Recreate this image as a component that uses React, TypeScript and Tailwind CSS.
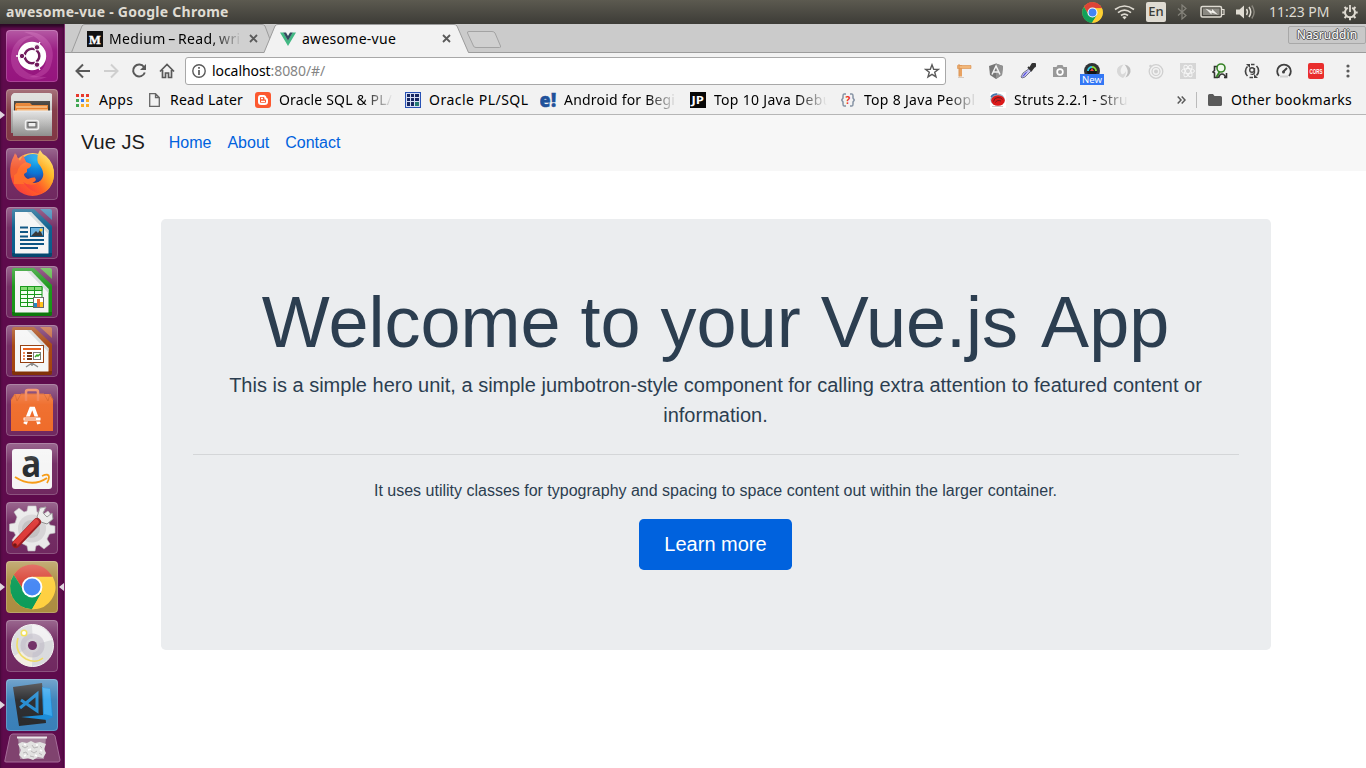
import React from "react";

type Kids = { children?: React.ReactNode };

function Glyph({ w = 16, h = 16, vb, children }: Kids & { w?: number; h?: number; vb?: string }) {
  return (
    <svg width={w} height={h} viewBox={vb ?? `0 0 ${w} ${h}`} className="block shrink-0" fill="none">
      {children}
    </svg>
  );
}

/* ---------- system bar ---------- */

function ChromeLogo({ size }: { size: number }) {
  return (
    <svg width={size} height={size} viewBox="0 0 48 48" className="block shrink-0">
      <circle cx="24" cy="24" r="23.500" fill="#fdd033" />
      <path d="M4.500 11A23.500 23.500 0 0 1 46 15H24L15 29Z" fill="#dc4437" />
      <path d="M4.500 11A23.500 23.500 0 0 0 23 47.500L34 30L24 32L15 29Z" fill="#12a05a" />
      <path d="M24 14H45.500A23.500 23.500 0 0 1 23 47.500L34 30Z" fill="#fdd033" />
      <circle cx="24" cy="24" r="11.500" fill="#fff" />
      <circle cx="24" cy="24" r="9" fill="#4285f4" />
    </svg>
  );
}

function SystemBar() {
  return (
    <header className="flex h-6 shrink-0 items-center bg-linear-to-b from-[#5c5a50] to-[#3d3c37] pl-1.5 text-[#dfdbd2]">
      <span className="text-[14px] font-bold leading-6 tracking-[0.26px]">awesome-vue - Google Chrome</span>
      <div className="ml-auto flex h-6 items-center">
        <ChromeLogo size={21} />
        <div className="ml-[11px]">
          <Glyph w={21} h={16}>
            <g stroke="#dfdbd2" strokeWidth="1.7">
              <path d="M1 5.5Q10.500-1.500 20 5.500" />
              <path d="M4 8.700Q10.500 3.500 17 8.700" />
              <path d="M7 11.500Q10.500 8.600 14 11.500" />
            </g>
            <path d="M8.300 13Q10.500 11.500 12.700 13L10.500 15.500Z" fill="#dfdbd2" />
          </Glyph>
        </div>
        <span className="ml-[11px] flex h-5 w-5 items-center justify-center rounded-[2px] bg-[#dfdbd2] text-[13px] font-medium text-[#3c3b37]">En</span>
        <div className="ml-[10px]">
          <Glyph w={12} h={16}>
            <path d="M2 4.500L10 11.500L6 15V1L10 4.500L2 11.500" stroke="#85837b" strokeWidth="1.200" />
          </Glyph>
        </div>
        <div className="ml-3">
          <Glyph w={25} h={14}>
            <rect x="1" y="1.500" width="20.500" height="10.500" rx="1.500" stroke="#dfdbd2" strokeWidth="1.500" />
            <path d="M22 4.500h2v5h-2" stroke="#dfdbd2" strokeWidth="1.200" />
            <rect x="3" y="3.500" width="16.500" height="6.500" fill="#8b8982" />
            <path d="M5.500 3.500L12 6.300L12 4L18 9.800L11.500 7.500L11.500 9.500Z" fill="#f2f0eb" />
          </Glyph>
        </div>
        <div className="ml-[11px]">
          <Glyph w={20} h={16}>
            <path d="M0 5.500h3.500L8 1.500v13L3.500 10.500H0z" fill="#dfdbd2" />
            <path d="M10.500 5Q12.500 8 10.500 11M13 3Q16.500 8 13 13" stroke="#dfdbd2" strokeWidth="1.500" />
            <path d="M15.800 1.500Q20.500 8 15.800 14.500" stroke="#89867d" strokeWidth="1.400" />
          </Glyph>
        </div>
        <span className="ml-[13px] w-[61px] whitespace-nowrap text-[14px] leading-6 tracking-[-0.02px]">11:23 PM</span>
        <div className="ml-3 mr-2">
          <Glyph w={16} h={18}>
            <g stroke="#dfdbd2">
              <path d="M5.800 4.800A5 5 0 1 0 10.200 4.800" strokeWidth="2" />
              <path d="M8 2V9" strokeWidth="1.800" />
              <path d="M.300 9.500h2.500M13.200 9.500h2.500M8 14.500V17.200M2.500 4l1.800 1.800M13.500 4l-1.800 1.800M2.500 15l1.800-1.800M13.500 15l-1.800-1.800" strokeWidth="2" />
            </g>
          </Glyph>
        </div>
      </div>
    </header>
  );
}

/* ---------- launcher ---------- */

function Tile({ children, tone, left, right }: Kids & { tone: string; left?: boolean; right?: boolean }) {
  return (
    <div className="relative flex h-[52px] w-full shrink-0 pl-1.5">
      {left && (
        <svg width="5" height="10" className="absolute left-0 top-[21px]"><path d="M0 1L5 5L0 9Z" fill="#e0d6de" /></svg>
      )}
      {right && (
        <svg width="5" height="10" className="absolute right-0 top-[21px]"><path d="M5 1L0 5L5 9Z" fill="#e0d6de" /></svg>
      )}
      <div className={`h-[52px] w-[52px] overflow-hidden rounded-[4px] ${tone}`}>
        <svg width="52" height="52" viewBox="0 0 52 52" fill="none" className="block">
          {children}
          <rect width="52" height="52" fill="url(#shine)" />
          <rect x=".500" y=".500" width="51" height="51" rx="3.500" stroke="#fff" strokeOpacity=".2" />
        </svg>
      </div>
    </div>
  );
}

function OfficeSheet({ edge, dark, fold, children }: Kids & { edge: string; dark: string; fold: string }) {
  return (
    <g>
      <path d="M8 2H28L46 19V48Q46 50 44 50H8Q6 50 6 48V4Q6 2 8 2Z" fill={edge} />
      <path d="M6 46V48Q6 50 8 50H44Q46 50 46 48V46Z" fill={dark} opacity=".6" />
      <path d="M9 5H25L42.500 23V46.500H9Z" fill="#f5f5f5" />
      <path d="M25 5L42.500 23V27L21 5Z" fill="#d3d9da" />
      <path d="M34 2H44Q46 2 46 4V13Z" fill={fold} opacity=".85" />
      {children}
    </g>
  );
}

function Launcher() {
  const glass = "bg-[#702860]";
  return (
    <aside className="flex w-[65px] shrink-0 flex-col gap-[7px] overflow-hidden border-r border-[#822b70] bg-[#5e0b4c] pt-1.5 shadow-[inset_0_3px_3px_#2c0826]">
      <svg width="0" height="0" className="absolute">
        <defs>
          <linearGradient id="shine" x1="0" y1="0" x2="0" y2="1">
            <stop offset="0" stopColor="#fff" stopOpacity=".3" />
            <stop offset=".4" stopColor="#fff" stopOpacity=".04" />
            <stop offset="1" stopColor="#fff" stopOpacity="0" />
          </linearGradient>
          <linearGradient id="steel" x1="0" y1="0" x2="0" y2="1">
            <stop offset="0" stopColor="#e4e4e4" />
            <stop offset="1" stopColor="#8e8e8c" />
          </linearGradient>
          <linearGradient id="fire" x1="1" y1="0" x2="0" y2="1">
            <stop offset="0" stopColor="#fff36e" />
            <stop offset=".35" stopColor="#ffb321" />
            <stop offset=".65" stopColor="#ff5b25" />
            <stop offset="1" stopColor="#f32a46" />
          </linearGradient>
          <radialGradient id="globe" cx=".6" cy=".2" r=".8">
            <stop offset="0" stopColor="#00a9f0" />
            <stop offset=".6" stopColor="#066ed1" />
            <stop offset="1" stopColor="#312a80" />
          </radialGradient>
        </defs>
      </svg>

      <Tile tone="bg-[#96147e]">
        <path d="M18 2C39 0 52 17 45 35C43 44 34 49 23 47C37 43 43 34 39 20C35 9 27 5 18 2Z" fill="#d45eb8" opacity=".35" />
        <path d="M7 18C-2 43 21 56 41 47C28 47 15 43 12 30C10 19 15 10 28 6C18 5 11 10 7 18Z" fill="#d76dbd" opacity=".3" />
        <circle cx="26" cy="26" r="14.200" fill="#fff" />
        <circle cx="26" cy="26" r="7.300" stroke="#6c1458" strokeWidth="2.600" />
        <path d="M26 26L10 26M26 26L34 12M26 26L34 40" stroke="#fff" strokeWidth="1.400" />
        <circle cx="26" cy="26" r="5.800" fill="#fff" />
        <g fill="#6c1458" stroke="#fff" strokeWidth="1">
          <circle cx="16" cy="26" r="2.700" /><circle cx="31" cy="17.300" r="2.700" /><circle cx="31" cy="34.700" r="2.700" />
        </g>
      </Tile>

      <Tile tone="bg-[#813744]" left>
        <path d="M8 5H43Q45 5 46 9V44H5V9Q5 5 8 5Z" fill="url(#steel)" />
        <path d="M5 10H46V5Q45 4 43 4H8Q6 4 5 10Z" fill="#d8d8d6" />
        <path d="M8 12H44V24H8Z" fill="#34312d" />
        <path d="M9 16L10 14H24L26 16H42V23H9Z" fill="#e77b25" />
        <path d="M10 18H41M11 21H42" stroke="#ffe2b2" />
        <path d="M7 22H46V47H7Z" fill="url(#steel)" />
        <path d="M7 22H46" stroke="#eee" />
        <rect x="19.500" y="31.500" width="13" height="9" rx="2" fill="#aaa" stroke="#efefef" strokeWidth="1.500" />
        <rect x="22" y="33.500" width="8" height="4.500" fill="#eee" stroke="#555" />
      </Tile>

      <Tile tone={glass}>
        <circle cx="26.500" cy="26.500" r="21.500" fill="url(#fire)" />
        <circle cx="27" cy="20.500" r="14.500" fill="url(#globe)" />
        <path d="M10 6Q11 10 14 13L17 7Q18 11 20 14L25 16Q26 19 21 21L21 24L18 26Q18 29 22 31Q25 29 29 29.500L30 32Q27 36 22 36H8V14Z" fill="#ff6a26" />
        <path d="M6 12Q8 8 9 5Q11 10 14 13L17 7L20 14Q12 17 11 25L5 30Q3 20 6 12Z" fill="#f4582d" />
        <path d="M17 34Q25 40 33 34Q42 27 32 15Q30 8 34 2Q36 6 40 8Q49 16 48 28Q46 42 35 46Q24 44 17 34Z" fill="url(#fire)" />
      </Tile>

      <Tile tone={glass}>
        <OfficeSheet edge="#075c8b" dark="#03395d" fold="#278fc0">
          <path d="M14 20.500h8M14 25h8M14 29.500h8M14 33h24M14 37h24M14 41h18" stroke="#075080" strokeWidth="2" />
          <rect x="24.500" y="20.500" width="13" height="9" fill="#69b1df" stroke="#075080" />
          <path d="M25 29L30 24L32 26L34 23L37 29Z" fill="#333" /><circle cx="35" cy="23" r="1.500" fill="#ffc72b" />
        </OfficeSheet>
      </Tile>

      <Tile tone={glass}>
        <OfficeSheet edge="#169415" dark="#086507" fold="#4bca36">
          <path d="M14.500 20.500H36V40.500H14.500Z" fill="#f2fff1" stroke="#119515" />
          <path d="M14.500 20.500H36V24.500H14.500Z" fill="#83db71" stroke="#119515" />
          <path d="M14.500 28.500H36M14.500 32.500H36M14.500 36.500H36M21.500 20.500V40.500M28.500 20.500V40.500" stroke="#119515" />
          <rect x="27.500" y="31.500" width="10" height="10" fill="#fff" stroke="#666" />
          <path d="M28 37h3v4h-3z" fill="#2384c2" /><path d="M31 33h3v8h-3z" fill="#ef682a" /><path d="M34 36h3v5h-3z" fill="#ffc21a" />
        </OfficeSheet>
      </Tile>

      <Tile tone={glass}>
        <OfficeSheet edge="#a4420c" dark="#6b2707" fold="#d06a2c">
          <rect x="14.500" y="20.500" width="23" height="17" fill="#fff" stroke="#933b0b" />
          <path d="M17 24h18" stroke="#e85d18" strokeWidth="2" />
          <path d="M17 28h2M17 31h2M17 34h2" stroke="#e85d18" strokeWidth="1.500" />
          <path d="M21 28h5M21 31h5M21 34h5" stroke="#71300d" strokeWidth="2" />
          <rect x="27.500" y="27.500" width="7" height="7" fill="#fff" stroke="#777" />
          <path d="M29 32l2-2 1 1 2-2" stroke="#33a321" strokeWidth="1.500" />
          <path d="M26 38v3M26 38l-6 4M26 38l6 4" stroke="#888" strokeWidth="1.500" />
        </OfficeSheet>
      </Tile>

      <Tile tone={glass}>
        <path d="M5 16L9 10H43L47 16V47H5Z" fill="#ef6b29" />
        <path d="M5 16L9 10L11 17L15 10H38L42 17L44 10L47 16" stroke="#d75b1c" />
        <path d="M20 17V8Q20 6 22 6H30Q32 6 32 8V17" stroke="#f07a49" strokeWidth="2.500" />
        <path d="M19 40L25 24.500H27.500L33 40" stroke="#fff" strokeWidth="3.600" />
        <rect x="17" y="33" width="18" height="4" rx="1" fill="#fff" stroke="#ef6b29" />
        <path d="M18.500 35H30" stroke="#ef6b29" />
      </Tile>

      <Tile tone={glass}>
        <rect x="6" y="6" width="40" height="40" rx="3" fill="#f5f5f5" />
        <text x="15.200" y="33.500" fontFamily="Open Sans" fontSize="37" fontWeight="700" fill="#24282b" textLength="20" lengthAdjust="spacingAndGlyphs">a</text>
        <path d="M9 34Q26 45 41 35" stroke="#f69a13" strokeWidth="2" />
        <path d="M36 33Q43 30 43 34Q43 37 41 40" stroke="#f69a13" strokeWidth="1.800" />
      </Tile>

      <Tile tone={glass}>
        <g fill="#e9e9e9" stroke="#b9b3b8" strokeWidth=".6">
          <path d="M22 4H30L31 10L37 12.500L42 9L46 14L42.500 20L44 23L49 24V31L43.500 32L41 37L44 42L38 47L33 43L30 44L29 49H22L21 44L15 41L10 44L6 38L9.500 33L8 30L3.500 29V22L9 21L11 15L8 10L13 6L18 10L21 9Z" />
        </g>
        <circle cx="26" cy="26.500" r="14" fill="#d5d3d5" />
        <circle cx="25" cy="27" r="9" fill="#c2c0c1" />
        <path d="M31 15L34 6L40 5L37 11L41 15L46 11L47 17L41 22L35 20Z" fill="#e9e9e9" stroke="#8c8c8c" />
        <path d="M10 42L31 20" stroke="#9d181b" strokeWidth="8" strokeLinecap="round" />
        <path d="M10 41L30 20" stroke="#dc3735" strokeWidth="5.500" strokeLinecap="round" />
        <circle cx="9" cy="43" r="1.800" fill="#6d1514" />
      </Tile>

      <Tile tone="bg-[#ac8c40]" left right>
        <g transform="translate(3.500 3.500) scale(.94)">
          <circle cx="24" cy="24" r="23.500" fill="#fdd03b" />
          <path d="M4.500 11A23.500 23.500 0 0 1 47 17H24L16 29Z" fill="#d94335" />
          <path d="M4.500 11A23.500 23.500 0 0 0 24 47.500L34 30L24 32L16 29Z" fill="#0b9b58" />
          <path d="M24 13H46A23.500 23.500 0 0 1 24 47.500L34 30Z" fill="#fecf3e" />
          <circle cx="24" cy="24" r="11" fill="#fff" /><circle cx="24" cy="24" r="9" fill="#4285f4" />
        </g>
      </Tile>

      <Tile tone={glass}>
        <circle cx="26.500" cy="25.500" r="21" fill="#d9dadd" stroke="#f4f4f3" />
        <path d="M26 5A21 21 0 0 1 46 20L27 25Z" fill="#f9f9f9" opacity=".7" />
        <path d="M26 46A21 21 0 0 1 8 36L27 25Z" fill="#f7f3e2" opacity=".8" />
        <circle cx="26.500" cy="25.500" r="12" fill="#bcb8c4" opacity=".6" />
        <circle cx="26.500" cy="25.500" r="7" fill="#d3d0d6" />
        <circle cx="26.500" cy="25.500" r="4.500" fill="#6f2b63" />
        <path d="M12 18Q8 32 20 39Q30 44 37 38" stroke="#efdb62" strokeWidth="1.600" />
        <circle cx="18" cy="13" r="3.500" fill="#f1de46" /><circle cx="18" cy="13" r="2" fill="#fff" />
      </Tile>

      <Tile tone="bg-[#397fb8]" left>
        <path d="M7 8L36 4L40 44L13 47Z" fill="#28292c" />
        <path d="M36 8L44 9L47 38L41 41L15 38L37 36Z" fill="#198bd7" />
        <path d="M37 9L44 10L46 37L38 35Z" fill="#36a6ed" />
        <path d="M15 21L31 32V15L14 29" stroke="#238bd0" strokeWidth="3" />
      </Tile>

      <svg width="58" height="30" viewBox="0 0 58 30" className="-mt-[5px] ml-1 block shrink-0" fill="none">
        <path d="M9 1H48Q50 1 51 3L56 27Q56 29 54 29H2Q0 29 1 27L6 3Q7 1 9 1Z" fill="#80436f" stroke="#a66c99" />
        <path d="M14 4H42L40 26H16Z" fill="#c7bdc5" opacity=".6" />
        <path d="M14 11L18 9L23 10L27 8L31 10L36 9L42 11L40 16L42 20L39 25L34 24L29 27L24 25L19 26L15 22L17 17Z" fill="#e2e2e1" />
        <path d="M18 13l3 2 3-2M28 12l2 3 4-1M36 13l2 2M19 20l3-1 2 3M27 18l3 2 3-2M35 20l3 2M26 23l4 1" stroke="#b3b1b2" strokeWidth=".9" />
        <path d="M20 11l2 1M32 12h2M24 17l3-1M36 17l2 1M20 23l2-1M31 22l2 1" stroke="#fff" strokeWidth="1.500" />
        <path d="M13 4.500H43" stroke="#ece6ea" strokeWidth="2" />
      </svg>
    </aside>
  );
}

/* ---------- browser chrome ---------- */

function Close() {
  return (
    <Glyph w={9} h={9}><path d="M1 1L8 8M8 1L1 8" stroke="#5a5a5a" strokeWidth="1.800" /></Glyph>
  );
}

const fade = "[mask-image:linear-gradient(to_right,black_calc(100%-30px),transparent)]";

function TabStrip() {
  return (
    <div className="relative flex h-[29px] shrink-0 items-center bg-[#cbcbcb] text-[14px] text-black">
      <svg width="1301" height="29" viewBox="65 24 1301 29" className="absolute inset-0" fill="none">
        <path d="M65 52.500H1366" stroke="#9c9c9c" />
        <path d="M71.500 52.500L82 26Q83 24.500 85 24.500H262Q264 24.500 265 26L271 42L266 52.500Z" fill="#d0d0d0" stroke="#9c9c9c" />
        <path d="M264 53L275 26Q276 24.500 278 24.500H454Q456 24.500 457 26L468.500 53Z" fill="#f2f2f2" />
        <path d="M264 52.500L275 26Q276 24.500 278 24.500H454Q456 24.500 457 26L468.500 52.500" stroke="#9c9c9c" />
        <path d="M469 31.500H492Q494 31.500 495 33L500.500 46Q501 47.500 499.500 47.500H476Q474 47.500 473.500 46L467.500 33Q467 31.500 469 31.500Z" fill="#d0d0d0" stroke="#a3a3a3" />
      </svg>
      <div className="relative ml-[22px] flex h-full w-[193px] items-center">
        <Glyph w={16} h={16}>
          <rect width="16" height="16" fill="#111" />
          <text x="8" y="12.500" textAnchor="middle" fontFamily="Liberation Serif" fontWeight="700" fontSize="12.500" fill="#fff" stroke="#fff" strokeWidth=".4">M</text>
        </Glyph>
        <span className={`ml-1.5 w-[133px] overflow-hidden whitespace-nowrap leading-[28px] tracking-[0.35px] [word-spacing:-1.5px] ${fade}`}>Medium – Read, wri</span>
        <div className="ml-[7px]"><Close /></div>
      </div>
      <div className="relative flex h-full w-[180px] items-center">
        <Glyph w={16} h={14}>
          <path d="M0 .500H3.500L8 8.500L12.500 .500H16L8 14Z" fill="#42b883" />
          <path d="M3.300 .500H6L8 4L10 .500H12.700L8 8.700Z" fill="#35495e" />
        </Glyph>
        <span className="ml-1.5 w-[138px] whitespace-nowrap leading-[28px] tracking-[0.27px]">awesome-vue</span>
        <div className="ml-[2px]"><Close /></div>
      </div>
      <div className="relative mb-auto ml-auto mt-0.5 flex h-[18px] w-[78px] items-center justify-center rounded-[2px] border border-[#a8a8a8] bg-[#c8c8c8] text-[12px] tracking-[0.15px] text-white [text-shadow:1px_0_#555,-1px_0_#555,0_1px_#555,0_-1px_#555]">Nasruddin</div>
    </div>
  );
}

function Ext({ children }: Kids) {
  return <div className="flex w-8 justify-center">{children}</div>;
}

function Toolbar() {
  return (
    <div className="flex h-[34px] shrink-0 items-center bg-[#f2f2f2] pt-0.5 pl-2.5">
      <div className="flex w-[110px] items-center gap-3">
        <Glyph><path d="M15 8H2M8 1.500L1.500 8L8 14.500" stroke="#595959" strokeWidth="2" /></Glyph>
        <Glyph><path d="M1 8H14M8 1.500L14.500 8L8 14.500" stroke="#cfcfcf" strokeWidth="2" /></Glyph>
        <Glyph><path d="M13 4A6 6 0 1 0 13.800 9.500" stroke="#595959" strokeWidth="2" /><path d="M15 1V7H9Z" fill="#595959" /></Glyph>
        <Glyph><path d="M1 8.500L8 1.500L15 8.500M3.500 7V14.500H6.500V10H9.500V14.500H12.500V7" stroke="#595959" strokeWidth="1.700" /></Glyph>
      </div>
      <div className="flex h-7 w-[761px] items-center rounded-[3px] border border-[#a8a8a8] bg-white pl-[5px] pr-[5px]">
        <Glyph>
          <circle cx="8" cy="8" r="6.200" stroke="#5a5a5a" strokeWidth="1.400" />
          <path d="M8 7V12M8 4V5.700" stroke="#5a5a5a" strokeWidth="1.700" />
        </Glyph>
        <span className="ml-[5px] text-[14px] leading-6 tracking-[-0.07px] text-black">localhost<span className="text-[#858585]">:8080/#/</span></span>
        <div className="ml-auto">
          <Glyph><path d="M8 1.800L9.700 6.200L14.400 6.400L10.700 9.300L12 13.900L8 11.300L4 13.900L5.300 9.300L1.600 6.400L6.300 6.200Z" stroke="#5a5a5a" strokeWidth="1.400" /></Glyph>
        </div>
      </div>
      <div className="ml-0.5 flex">
        <Ext><Glyph><path d="M3 2H6V13.500H3Z" fill="#e8a262" /><path d="M1.500 2.500H15V5.500H1.500Z" fill="#f2b779" stroke="#d88d4b" strokeWidth=".6" /><path d="M3 1V13.500" stroke="#dc9657" /><path d="M2 14.500h6" stroke="#d5cbc2" /></Glyph></Ext>
        <Ext><Glyph><path d="M8 .500L15 3L14 12L8 16L2 12L1 3Z" fill="#777" /><path d="M8 .500L15 3L14 12L8 16Z" fill="#929292" /><path d="M4 11.500L8 3L12 11.500M5.500 9H10.500" stroke="#f4f4f4" strokeWidth="1.500" /></Glyph></Ext>
        <Ext><Glyph><path d="M10 5L12 7L5 14L2 15L1 14L3 10Z" fill="#c8c7ef" stroke="#74748b" /><path d="M5 10L8 8L4 13L2 14Z" fill="#4840de" /><path d="M8 4L12 8M10 5L12 1.500Q14-.500 15.500 1.500Q16 3 14 4L11.500 7Z" fill="#333" stroke="#333" strokeWidth="1.800" /></Glyph></Ext>
        <Ext><Glyph><path d="M1 4H4.500L5.500 2H10.500L11.500 4H15V14H1Z" fill="#999" /><circle cx="8" cy="9" r="3.700" fill="#fff" /><circle cx="8" cy="9" r="2" fill="#999" /></Glyph></Ext>
        <Ext>
          <div className="relative">
            <Glyph><circle cx="8" cy="8" r="8" fill="#313335" /><circle cx="8" cy="8" r="5" fill="#151515" /><path d="M4 8A4 4 0 0 1 8 4" stroke="#37c7e0" strokeWidth="2" /><path d="M8 4A4 4 0 0 1 12 8" stroke="#8ad63a" strokeWidth="2" /><path d="M8 5L10 8H6Z" fill="#e9443d" /></Glyph>
            <span className="absolute -left-1 top-[11px] flex h-[11px] w-6 items-center justify-center bg-[#3478f5] text-[9.500px] leading-none text-white">New</span>
          </div>
        </Ext>
        <Ext><Glyph><path d="M8.500 1.500Q15.500 3 14.500 9Q13 13.500 9.500 14.500Q13 9 11 5.500Q10 3 8.500 1.500Z" fill="#bdbdbd" /><path d="M7.500 1.500Q0 3 1 9Q2 13.500 7 15Q10 13 10 8Q8.500 12 5.500 11Q3 7 7.500 1.500Z" fill="#d8d8d8" /></Glyph></Ext>
        <Ext><Glyph><circle cx="8" cy="8.500" r="6.800" stroke="#d0d0d0" strokeWidth="1.300" /><circle cx="8" cy="8.500" r="4" stroke="#d0d0d0" strokeWidth="1.200" /><circle cx="8" cy="8.500" r="2" fill="#d0d0d0" /><circle cx="2.500" cy="3" r="1.300" fill="#d0d0d0" /></Glyph></Ext>
        <Ext><Glyph><rect width="16" height="16" fill="#d6d6d6" /><g stroke="#f6f6f6"><ellipse cx="8" cy="8" rx="6.500" ry="2.500" /><ellipse cx="8" cy="8" rx="6.500" ry="2.500" transform="rotate(60 8 8)" /><ellipse cx="8" cy="8" rx="6.500" ry="2.500" transform="rotate(120 8 8)" /></g></Glyph></Ext>
        <Ext><Glyph><path d="M5 3.500H2.500V7.500L1 9L2.500 10V14.500H6M12 14.500H14.500V10" stroke="#333" strokeWidth="1.600" /><circle cx="9" cy="5" r="4" fill="#eff9ec" stroke="#378327" strokeWidth="1.600" /><path d="M7.500 9L4.500 14" stroke="#378327" strokeWidth="2" /><path d="M6.500 15Q7.500 11 10 11Q12.500 11 14 15" stroke="#333" strokeWidth="1.700" /></Glyph></Ext>
        <Ext><Glyph><path d="M3.500 13A6.500 6.500 0 0 1 3.500 3.500M12.500 3A6.500 6.500 0 0 1 12.500 12.500M7 1.500H10.500M5.500 14.500H9" stroke="#444" strokeWidth="1.700" /><path d="M2 1H6V5ZM14 15H10V11Z" fill="#444" /><circle cx="8" cy="7" r="2.300" stroke="#444" strokeWidth="1.400" /><path d="M10.500 5V9.500Q10 12 6.500 11" stroke="#444" strokeWidth="1.300" /></Glyph></Ext>
        <Ext><Glyph><path d="M3 13A6.800 6.800 0 1 1 13 13" stroke="#414141" strokeWidth="1.800" /><path d="M7 9L11 5" stroke="#414141" strokeWidth="2" /><circle cx="7.500" cy="9" r="1.500" fill="#414141" /><path d="M4 13.500H12" stroke="#d1d1d1" strokeWidth="2" /></Glyph></Ext>
        <Ext><Glyph><rect width="16" height="16" rx="2" fill="#e92e2d" /><text x="1.500" y="11" fill="#fff" fontFamily="Liberation Sans" fontWeight="700" fontSize="8" textLength="13" lengthAdjust="spacingAndGlyphs">CORS</text></Glyph></Ext>
        <Ext><Glyph><g fill="#5a5a5a"><circle cx="8" cy="3" r="1.600" /><circle cx="8" cy="8" r="1.600" /><circle cx="8" cy="13" r="1.600" /></g></Glyph></Ext>
      </div>
    </div>
  );
}

function BookmarkText({ children, w, cut }: Kids & { w: string; cut?: boolean }) {
  return <span className={`overflow-hidden whitespace-nowrap ${w} ${cut ? fade : ""}`}>{children}</span>;
}

function Bookmarks() {
  return (
    <div className="flex h-7 shrink-0 items-center border-b border-[#b6b6b6] bg-[#f2f2f2] pb-px pl-[11px] text-[14px] leading-[26px] tracking-[0.4px] text-black">
      <div className="flex w-[73px] items-center gap-[10px]">
        <Glyph w={13} h={13}>
          <path d="M0 0h3v3H0zM5 0h3v3H5zM10 0h3v3h-3z" fill="#e8392d" />
          <path d="M0 5h3v3H0z" fill="#41a653" /><path d="M5 5h3v3H5z" fill="#397ced" /><path d="M10 5h3v3h-3z" fill="#fbac25" />
          <path d="M0 10h3v3H0z" fill="#41a653" /><path d="M5 10h3v3H5zM10 10h3v3h-3z" fill="#fbac25" />
        </Glyph>
        <BookmarkText w="w-[38px]">Apps</BookmarkText>
      </div>
      <div className="flex w-[106px] items-center gap-[10px]">
        <Glyph w={11} h={14}><path d="M.700 .700H6.500L10.300 4.500V13.300H.700ZM6.500 .700V4.500H10" stroke="#666" strokeWidth="1.300" /></Glyph>
        <BookmarkText w="w-[75px] tracking-[0.25px]">Read Later</BookmarkText>
      </div>
      <div className="flex w-[150px] items-center gap-2">
        <Glyph><rect width="16" height="16" rx="3" fill="#fc5930" /><path d="M5.500 4H8.500Q10.500 4 10.500 6.500Q12 6.500 12 8V10Q12 12 9.500 12H6.500Q4 12 4 10V6Q4 4 5.500 4Z" stroke="#fff" strokeWidth="2" /><path d="M6 6.500h2M6 9.500h4" stroke="#fff" strokeWidth="1.500" /></Glyph>
        <BookmarkText w="w-[114px] tracking-[0.15px]" cut>Oracle SQL &amp; PL/</BookmarkText>
      </div>
      <div className="flex w-[135px] items-center gap-2">
        <Glyph><rect x=".500" y=".500" width="15" height="15" fill="#d8e0f4" stroke="#2952b5" /><g fill="#182762"><path d="M2 2h3v3H2zM6 2h3v3H6zM10 2h4v3h-4zM2 6h3v3H2zM6 6h3v3H6zM10 6h4v3h-4zM2 10h3v4H2zM6 10h3v4H6z" /></g><path d="M10 10h4v4h-4z" fill="#247a71" /></Glyph>
        <BookmarkText w="w-[105px] tracking-[0.5px]">Oracle PL/SQL</BookmarkText>
      </div>
      <div className="flex w-[150px] items-center gap-[7px]">
        <Glyph w={17} h={16}><text x="-.5" y="14.500" fill="#20519a" stroke="#20519a" strokeWidth=".5" fontFamily="Open Sans" fontSize="20" fontWeight="800" textLength="17" lengthAdjust="spacingAndGlyphs">e!</text></Glyph>
        <BookmarkText w="w-[113px] tracking-[0.2px]" cut>Android for Begi</BookmarkText>
      </div>
      <div className="flex w-[151px] items-center gap-2">
        <Glyph><rect width="16" height="16" fill="#070707" /><text x="1.500" y="11.500" fontFamily="Open Sans" fontWeight="700" fontSize="11" fill="#fff" letterSpacing="0" textLength="12.500" lengthAdjust="spacingAndGlyphs">JP</text></Glyph>
        <BookmarkText w="w-[113px] tracking-[0.3px]" cut>Top 10 Java Debu</BookmarkText>
      </div>
      <div className="flex w-[149px] items-center gap-[9px]">
        <Glyph w={14} h={14}>
          <path d="M5 1H3Q2 1 2 3V5L.700 7L2 9V11Q2 13 3 13H5M9 1H11Q12 1 12 3V5L13.300 7L12 9V11Q12 13 11 13H9" stroke="#8592a4" strokeWidth="1.500" />
          <text x="7" y="10.500" textAnchor="middle" fontFamily="Open Sans" fontWeight="700" fontSize="10" fill="#ee2e20" letterSpacing="0">?</text>
        </Glyph>
        <BookmarkText w="w-[113px] tracking-[0.3px]" cut>Top 8 Java Peopl</BookmarkText>
      </div>
      <div className="flex w-[187px] items-center gap-2">
        <Glyph w={16} h={16}><rect width="16" height="16" fill="#fff" /><ellipse cx="7.500" cy="7.500" rx="7.200" ry="6" fill="#9fb4c8" /><ellipse cx="8" cy="8.500" rx="6.800" ry="5.200" fill="#dc1919" /><path d="M3.500 9.500Q4 5.500 8 5.500Q11 5.500 12.500 7.500M5.500 10.500Q7 7.500 11 9" stroke="#701b22" /><path d="M1 5Q3 2 7 2" stroke="#4575ad" strokeWidth="1.500" /><path d="M2 14.500H13" stroke="#ccc" /></Glyph>
        <BookmarkText w="w-[114px] tracking-[0.2px] [word-spacing:-1px]" cut>Struts 2.2.1 - Stru</BookmarkText>
      </div>
      <Glyph w={9} h={8}><path d="M.700 .500L4 4L.700 7.500M4.700 .500L8 4L4.700 7.500" stroke="#5a5a5a" strokeWidth="1.500" /></Glyph>
      <div className="ml-[10px] h-4 w-px bg-[#bbb]" />
      <div className="ml-[11px] flex items-center gap-[9px]">
        <Glyph w={14} h={12}><path d="M0 1.500Q0 0 1.500 0H5L6.500 2H12.500Q14 2 14 3.500V10.500Q14 12 12.500 12H1.500Q0 12 0 10.500Z" fill="#5a5a5a" /></Glyph>
        <BookmarkText w="w-[124px] tracking-[0.35px]">Other bookmarks</BookmarkText>
      </div>
    </div>
  );
}

/* ---------- page ---------- */

function Page() {
  return (
    <main className="flex grow flex-col bg-white font-['Liberation_Sans',sans-serif]">
      <nav className="flex h-14 items-center bg-[#f7f7f7] pl-4 text-[16px] text-[#0062de]">
        <span className="mr-6 pb-0.5 text-[20px] text-[#1c1c1c]">Vue JS</span>
        <div className="flex gap-4">
          <a>Home</a>
          <a>About</a>
          <a>Contact</a>
        </div>
      </nav>
      <section className="ml-24 mt-12 flex h-[431px] w-[1110px] flex-col items-center rounded-[4.800px] bg-[#ebedef] px-8 pt-16 text-center text-[#2c3e50]">
        <h1 className="mr-px text-[72px] leading-[79px]">Welcome to your Vue.js <span className="ml-[3px]">App</span></h1>
        <p className="mr-px mt-2 text-[20px] leading-[30px]">
          This is a simple hero unit, a simple jumbotron-style component for calling extra attention to featured content or information.
        </p>
        <hr className="my-6 w-full border-t border-[#d4d6d8]" />
        <p className="mr-px text-[16px] leading-6">It uses utility classes for typography and spacing to space content out within the larger container.</p>
        <button className="mr-px mt-4 h-[51px] w-[153px] rounded-[4.800px] bg-[#0062de] text-[20px] leading-[25px] text-white">Learn more</button>
      </section>
    </main>
  );
}

export default function App() {
  return (
    <div className="flex h-[768px] w-[1366px] flex-col overflow-hidden font-['Noto_Sans',sans-serif]">
      <SystemBar />
      <div className="flex min-h-0 grow">
        <Launcher />
        <div className="flex min-w-0 grow flex-col">
          <TabStrip />
          <Toolbar />
          <Bookmarks />
          <Page />
        </div>
      </div>
    </div>
  );
}
